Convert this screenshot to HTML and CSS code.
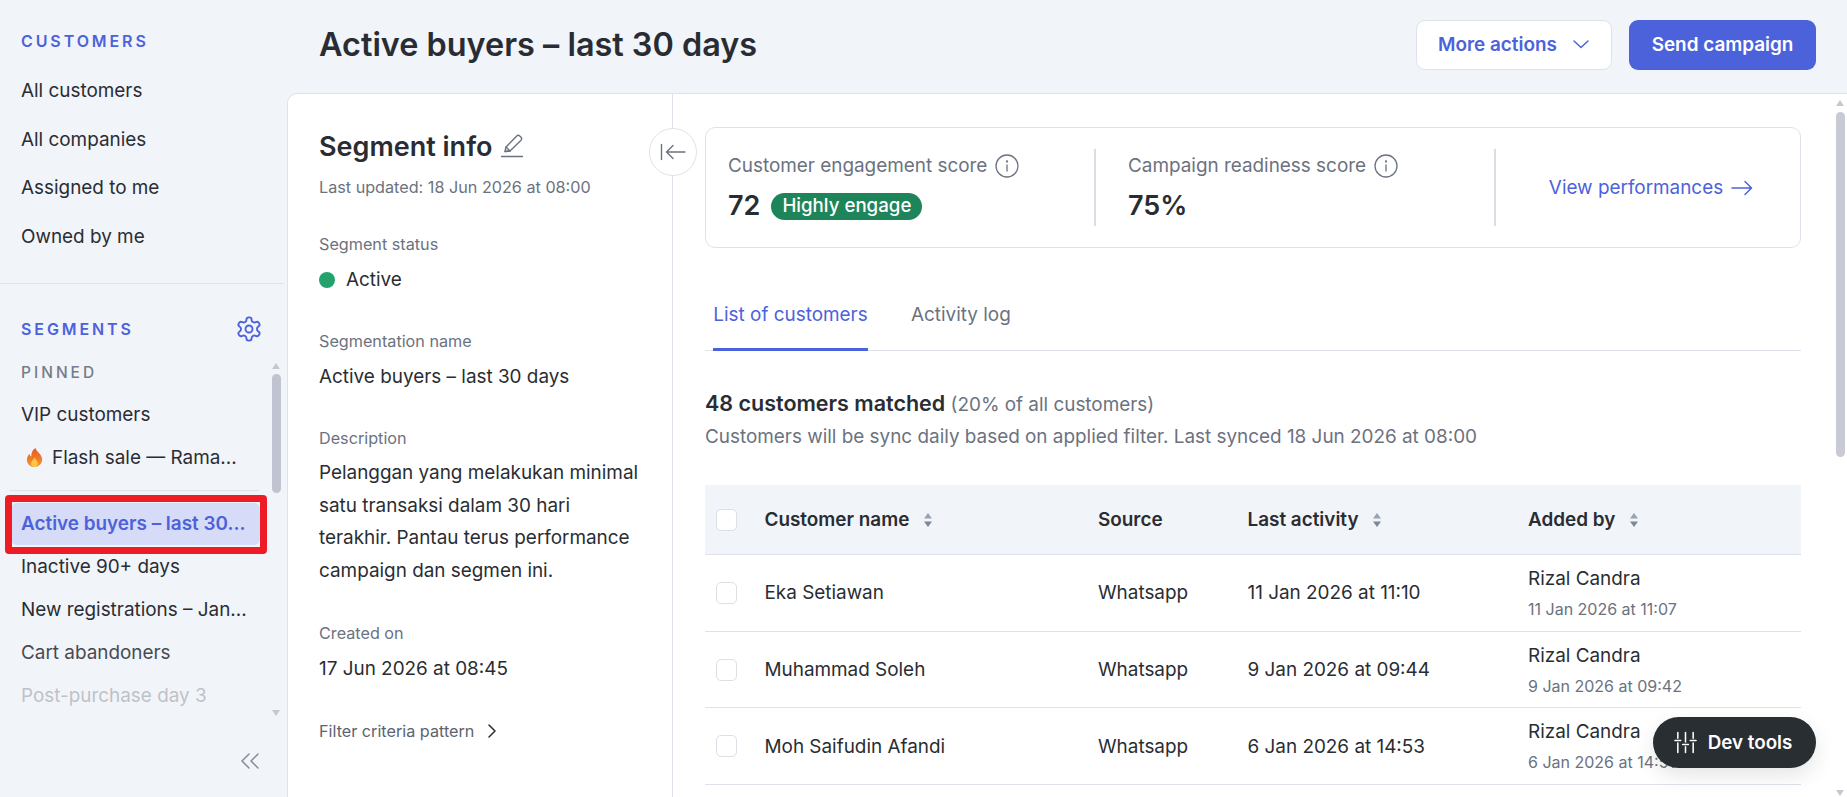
FILE: index.html
```html
<!DOCTYPE html>
<html lang="en">
<head>
  <meta charset="UTF-8">
  <title>Active buyers – last 30 days</title>
  <link rel="stylesheet" href="styles.css">
</head>
<body>

  <div class="app">
    <aside class="sidebar">
      <div class="side-top">
        <h3 class="side-title">CUSTOMERS</h3>
        <a class="side-link">All customers</a>
        <a class="side-link">All companies</a>
        <a class="side-link">Assigned to me</a>
        <a class="side-link">Owned by me</a>
      </div>

      <div class="side-segments">
        <div class="segments-head">
          <h3 class="side-title">SEGMENTS</h3>
          <svg class="gear" viewBox="0 0 24 24" fill="none" stroke="currentColor" stroke-width="1.6" stroke-linecap="round" stroke-linejoin="round">
            <path d="M12.22 2h-.44a2 2 0 0 0-2 2v.18a2 2 0 0 1-1 1.73l-.43.25a2 2 0 0 1-2 0l-.15-.08a2 2 0 0 0-2.73.73l-.22.38a2 2 0 0 0 .73 2.73l.15.1a2 2 0 0 1 1 1.72v.51a2 2 0 0 1-1 1.74l-.15.09a2 2 0 0 0-.73 2.73l.22.38a2 2 0 0 0 2.73.73l.15-.08a2 2 0 0 1 2 0l.43.25a2 2 0 0 1 1 1.73V20a2 2 0 0 0 2 2h.44a2 2 0 0 0 2-2v-.18a2 2 0 0 1 1-1.73l.43-.25a2 2 0 0 1 2 0l.15.08a2 2 0 0 0 2.73-.73l.22-.39a2 2 0 0 0-.73-2.73l-.15-.08a2 2 0 0 1-1-1.74v-.5a2 2 0 0 1 1-1.74l.15-.09a2 2 0 0 0 .73-2.73l-.22-.38a2 2 0 0 0-2.73-.73l-.15.08a2 2 0 0 1-2 0l-.43-.25a2 2 0 0 1-1-1.73V4a2 2 0 0 0-2-2z"/>
            <circle cx="12" cy="12" r="3"/>
          </svg>
        </div>

        <div class="segments-scroll">
          <div class="pinned-label">PINNED</div>
          <a class="seg-link">VIP customers</a>
          <a class="seg-link seg-flash">
            <svg class="flame" viewBox="0 0 18 22">
              <defs>
                <linearGradient id="flameFill" x1="0" y1="0" x2="0" y2="1">
                  <stop offset="0" stop-color="#e8552a"/>
                  <stop offset="1" stop-color="#f59a23"/>
                </linearGradient>
              </defs>
              <path d="M10 1c1 4 6 6 7 11 .7 5-3.300 9-8 9s-8.500-3.500-8-8.500c.3-2.500 1.600-4 2.700-5.500.3 1.500.8 2.500 1.800 3C5.500 6 7 3 10 1z" fill="url(#flameFill)"/>
              <path d="M9 11c.5 2 3.500 3.300 3.500 6 0 2.300-1.700 4-3.700 4s-3.500-1.700-3.500-3.700c0-2.300 2.700-3.600 3.700-6.300z" fill="#fbc64a"/>
            </svg>
            Flash sale — Rama...
          </a>
          <div class="seg-divider"></div>
          <a class="seg-link seg-active">Active buyers – last 30...</a>
          <a class="seg-link">Inactive 90+ days</a>
          <a class="seg-link">New registrations – Jan...</a>
          <a class="seg-link seg-fade1">Cart abandoners</a>
          <a class="seg-link seg-fade2">Post-purchase day 3</a>

          <div class="mini-scroll">
            <span class="arrow-up"></span>
            <span class="mini-thumb"></span>
            <span class="arrow-down"></span>
          </div>
        </div>

        <div class="side-collapse">
          <svg viewBox="0 0 20 18" fill="none" stroke="currentColor" stroke-width="1.5" stroke-linecap="round" stroke-linejoin="round">
            <path d="M9 2 2 9l7 7"/>
            <path d="M18 2l-7 7 7 7"/>
          </svg>
        </div>
      </div>

      <div class="highlight-box"></div>
    </aside>

    <div class="main">
      <header class="topbar">
        <h1>Active buyers – last 30 days</h1>
        <div class="top-actions">
          <button class="btn btn-outline">More actions
            <svg viewBox="0 0 18 10" fill="none" stroke="currentColor" stroke-width="1.5" stroke-linecap="round" stroke-linejoin="round"><path d="M2 2l7 6.500L16 2"/></svg>
          </button>
          <button class="btn btn-primary">Send campaign</button>
        </div>
      </header>

      <div class="card">
        <section class="info-panel">
          <div class="info-title">
            <h2>Segment info</h2>
            <svg viewBox="0 0 24 26" fill="none" stroke="currentColor" stroke-width="1.4" stroke-linecap="round" stroke-linejoin="round">
              <path d="M5 18.500l1-4.500L16.500 3.200a2.500 2.500 0 0 1 3.500 0l.8.8a2.500 2.500 0 0 1 0 3.500L10 18z"/>
              <path d="M5 18.500l5-.5M6 14l4 4"/>
              <path d="M1.500 23.500h21"/>
            </svg>
          </div>
          <p class="updated">Last updated: 18 Jun 2026 at 08:00</p>

          <div class="field field-status">
            <div class="field-label">Segment status</div>
            <div class="field-value status"><span class="dot"></span>Active</div>
          </div>
          <div class="field">
            <div class="field-label">Segmentation name</div>
            <div class="field-value">Active buyers – last 30 days</div>
          </div>
          <div class="field">
            <div class="field-label">Description</div>
            <div class="field-value desc">Pelanggan yang melakukan minimal satu transaksi dalam 30 hari terakhir. Pantau terus performance campaign dan segmen ini.</div>
          </div>
          <div class="field">
            <div class="field-label">Created on</div>
            <div class="field-value">17 Jun 2026 at 08:45</div>
          </div>
          <div class="filter-link">Filter criteria pattern
            <svg viewBox="0 0 10 16" fill="none" stroke="currentColor" stroke-width="1.5" stroke-linecap="round" stroke-linejoin="round"><path d="M2 2l6 6-6 6"/></svg>
          </div>

          <div class="collapse-btn">
            <svg viewBox="0 0 26 18" fill="none" stroke="currentColor" stroke-width="1.4" stroke-linecap="round" stroke-linejoin="round">
              <path d="M1.500 1.500v15"/>
              <path d="M25 9H7M13 2.500 6.500 9l6.500 6.500"/>
            </svg>
          </div>
        </section>

        <section class="content">
          <div class="scores">
            <div class="score">
              <div class="score-label">Customer engagement score
                <svg class="info" viewBox="0 0 24 24" fill="none" stroke="currentColor" stroke-width="1.3" stroke-linecap="round"><circle cx="12" cy="12" r="11"/><path d="M12 11v6"/><circle cx="12" cy="7.500" r=".5"/></svg>
              </div>
              <div class="score-value">72 <span class="badge">Highly engage</span></div>
            </div>
            <div class="score">
              <div class="score-label">Campaign readiness score
                <svg class="info" viewBox="0 0 24 24" fill="none" stroke="currentColor" stroke-width="1.3" stroke-linecap="round"><circle cx="12" cy="12" r="11"/><path d="M12 11v6"/><circle cx="12" cy="7.500" r=".5"/></svg>
              </div>
              <div class="score-value">75%</div>
            </div>
            <div class="score score-link">
              <a>View performances
                <svg viewBox="0 0 22 16" fill="none" stroke="currentColor" stroke-width="1.5" stroke-linecap="round" stroke-linejoin="round"><path d="M1 8h19M14 1.500 20.500 8 14 14.500"/></svg>
              </a>
            </div>
          </div>

          <nav class="tabs">
            <a class="tab tab-active">List of customers</a>
            <a class="tab">Activity log</a>
          </nav>

          <div class="matched">
            <div class="matched-count"><strong>48 customers matched</strong> <span>(20% of all customers)</span></div>
            <p>Customers will be sync daily based on applied filter. Last synced 18 Jun 2026 at 08:00</p>
          </div>

          <table class="customers">
            <colgroup>
              <col class="col-check">
              <col class="col-name">
              <col class="col-source">
              <col class="col-activity">
              <col>
            </colgroup>
            <thead>
              <tr>
                <th><span class="check"></span></th>
                <th>Customer name <svg class="sort" viewBox="0 0 10 16"><path d="M5 1 9 6.500H1z" fill="#9aa3b2"/><path d="M5 15 1 9.500h8z" fill="#7d8798"/></svg></th>
                <th>Source</th>
                <th>Last activity <svg class="sort" viewBox="0 0 10 16"><path d="M5 1 9 6.500H1z" fill="#9aa3b2"/><path d="M5 15 1 9.500h8z" fill="#7d8798"/></svg></th>
                <th>Added by <svg class="sort" viewBox="0 0 10 16"><path d="M5 1 9 6.500H1z" fill="#9aa3b2"/><path d="M5 15 1 9.500h8z" fill="#7d8798"/></svg></th>
              </tr>
            </thead>
            <tbody>
              <tr>
                <td><span class="check"></span></td>
                <td>Eka Setiawan</td>
                <td>Whatsapp</td>
                <td>11 Jan 2026 at 11:10</td>
                <td><div class="added">Rizal Candra</div><div class="added-date">11 Jan 2026 at 11:07</div></td>
              </tr>
              <tr>
                <td><span class="check"></span></td>
                <td>Muhammad Soleh</td>
                <td>Whatsapp</td>
                <td>9 Jan 2026 at 09:44</td>
                <td><div class="added">Rizal Candra</div><div class="added-date">9 Jan 2026 at 09:42</div></td>
              </tr>
              <tr>
                <td><span class="check"></span></td>
                <td>Moh Saifudin Afandi</td>
                <td>Whatsapp</td>
                <td>6 Jan 2026 at 14:53</td>
                <td><div class="added">Rizal Candra</div><div class="added-date">6 Jan 2026 at 14:51</div></td>
              </tr>
            </tbody>
          </table>
        </section>

        <div class="main-scroll">
          <span class="arrow-up"></span>
          <span class="main-thumb"></span>
          <span class="arrow-down"></span>
        </div>
      </div>
    </div>

    <button class="dev-tools">
      <svg viewBox="0 0 24 24" fill="none" stroke="currentColor" stroke-width="1.6" stroke-linecap="round">
        <path d="M4 1.500v6M4 12.500v10M12 1.500v10M12 16.500v6M20 1.500v6M20 12.500v10"/>
        <path d="M1 10h6M9 14h6M17 10h6"/>
      </svg>
      Dev tools
    </button>
  </div>

</body>
</html>
```
FILE: styles.css
```css
* {
  box-sizing: border-box;
}

html,
body {
  margin: 0;
  height: 100%;
  overflow: hidden;
}

body {
  font-family: Inter, "Liberation Sans", sans-serif;
  font-size: 18.900px;
  color: #292d33;
  background-color: #f1f4f9;
}

.app {
  display: flex;
  height: 797px;
  position: relative;
}

/* sidebar */
.sidebar {
  width: 287px;
  flex-shrink: 0;
  position: relative;
}

.side-top {
  height: 284px;
  padding: 31px 0 0 21px;
  border-bottom: 1px solid #dde1e9;
  margin-right: 3px;
}

.side-title {
  margin: 0;
  font-size: 16px;
  line-height: 20px;
  font-weight: 600;
  letter-spacing: 2.9px;
  color: #4c62db;
}

.side-top .side-title {
  margin-bottom: 16px;
}

.side-link {
  display: block;
  height: 48.500px;
  line-height: 48.500px;
}

.side-segments {
  padding-left: 21px;
  position: relative;
}

.segments-head {
  display: flex;
  align-items: center;
  justify-content: space-between;
  padding: 33px 24px 0 0;
  height: 57px;
}

.gear {
  width: 28px;
  height: 28px;
  color: #4c62db;
}

.segments-scroll {
  position: relative;
  height: 355px;
  margin-left: -21px;
  padding-left: 21px;
}

.pinned-label {
  margin-top: 22px;
  height: 20px;
  line-height: 20px;
  font-size: 15.500px;
  font-weight: 500;
  letter-spacing: 3px;
  color: #767c88;
}

.seg-link {
  display: block;
  height: 43px;
  line-height: 43px;
  white-space: nowrap;
}

.pinned-label + .seg-link {
  margin-top: 10px;
}

.seg-flash {
  display: flex;
  align-items: center;
  gap: 9px;
  padding-left: 5px;
}

.flame {
  width: 17px;
  height: 21px;
}

.seg-divider {
  height: 1px;
  width: 249px;
  margin: 11px 0 12px -11px;
  background-color: #dde1e9;
}

.seg-active {
  height: 42px;
  line-height: 42px;
  width: 249px;
  margin: 0 0 0 -10px;
  padding-left: 10px;
  font-weight: 600;
  color: #4c62db;
  background-color: #d6dbf7;
  border-radius: 6px;
}

.seg-fade1 {
  opacity: 0.85;
}

.seg-fade2 {
  opacity: 0.25;
}

.mini-scroll {
  position: absolute;
  top: 0;
  left: 272px;
  width: 9px;
  height: 353px;
}

.mini-thumb {
  position: absolute;
  top: 11px;
  left: 0;
  width: 9px;
  height: 119px;
  border-radius: 5px;
  background-color: #c0c4d0;
}

.arrow-up,
.arrow-down {
  position: absolute;
  left: 0;
  width: 0;
  height: 0;
  border-left: 4.500px solid transparent;
  border-right: 4.500px solid transparent;
}

.arrow-up {
  top: 0;
  border-bottom: 6px solid #c5c8d2;
}

.arrow-down {
  bottom: 0;
  border-top: 6px solid #c5c8d2;
}

.side-collapse {
  display: flex;
  justify-content: flex-end;
  padding: 34px 27px 0 0;
  color: #858b98;
}

.side-collapse svg {
  width: 20px;
  height: 18px;
}

.highlight-box {
  position: absolute;
  top: 495px;
  left: 5px;
  width: 262px;
  height: 59px;
  border: 7px solid #ee1c25;
  border-radius: 4px;
}

/* main */
.main {
  flex: 1;
  min-width: 0;
  display: flex;
  flex-direction: column;
}

.topbar {
  height: 93px;
  flex-shrink: 0;
  display: flex;
  align-items: flex-start;
  justify-content: space-between;
  padding: 20px 31px 0 32px;
}

.topbar h1 {
  margin: 1px 0 0;
  font-size: 32.400px;
  line-height: 48px;
  font-weight: 600;
}

.top-actions {
  display: flex;
  gap: 17px;
}

.btn {
  height: 50px;
  border-radius: 9px;
  font-family: inherit;
  font-size: 18.900px;
  font-weight: 600;
  padding: 0 0 2px;
}

.btn-outline {
  width: 196px;
  display: flex;
  align-items: center;
  justify-content: center;
  gap: 15px;
  color: #4c62db;
  background-color: #fff;
  border: 1px solid #dfe2ea;
}

.btn-outline svg {
  width: 18px;
  height: 10px;
}

.btn-primary {
  width: 187px;
  color: #fff;
  background-color: #4c62db;
  border: 0;
}

.card {
  flex: 1;
  min-height: 0;
  display: flex;
  position: relative;
  background-color: #fff;
  border-top: 1px solid #dfe2ea;
  border-left: 1px solid #dfe2ea;
  border-top-left-radius: 10px;
}

/* segment info */
.info-panel {
  width: 385px;
  flex-shrink: 0;
  padding: 33px 0 0 31px;
  border-right: 1px solid #dfe2ea;
  position: relative;
}

.info-title {
  display: flex;
  align-items: center;
  gap: 8px;
  height: 38px;
}

.info-title h2 {
  margin: 0;
  font-size: 27px;
  font-weight: 600;
}

.info-title svg {
  width: 24px;
  height: 26px;
  color: #6b7280;
}

.updated {
  margin: 12px 0 0;
  font-size: 16.200px;
  line-height: 20px;
  color: #6b7280;
}

.field {
  margin-top: 40px;
}

.field-status {
  margin-top: 37px;
}

.field-label {
  font-size: 16.200px;
  line-height: 20px;
  color: #6b7280;
}

.field-value {
  margin-top: 15px;
  line-height: 22px;
}

.status {
  display: flex;
  align-items: center;
  gap: 11px;
}

.dot {
  width: 16px;
  height: 16px;
  border-radius: 50%;
  background-color: #23a26d;
}

.desc {
  width: 322px;
  margin: 9px 0 -5px;
  line-height: 32.700px;
}

.filter-link {
  display: flex;
  align-items: center;
  gap: 13px;
  margin-top: 41px;
  font-size: 16.200px;
  line-height: 20px;
  color: #5c6370;
}

.filter-link svg {
  width: 10px;
  height: 16px;
  color: #292d33;
}

.collapse-btn {
  position: absolute;
  top: 34px;
  right: -25px;
  width: 48px;
  height: 48px;
  display: flex;
  align-items: center;
  justify-content: center;
  border: 1px solid #dfe2ea;
  border-radius: 50%;
  background-color: #fff;
  color: #6b7280;
}

.collapse-btn svg {
  width: 26px;
  height: 18px;
}

/* right content */
.content {
  flex: 1;
  min-width: 0;
  padding: 33px 46px 0 32px;
}

.scores {
  display: flex;
  height: 121px;
  padding: 21px 0;
  border: 1px solid #dfe2ea;
  border-radius: 10px;
}

.score {
  width: 390px;
  padding: 5px 0 0 22px;
  border-right: 2px solid #d9dde4;
}

.score + .score {
  width: 400px;
  padding-left: 32px;
}

.score-label {
  display: flex;
  align-items: center;
  gap: 8px;
  line-height: 24px;
  color: #6b7280;
}

.info {
  width: 24px;
  height: 24px;
}

.score-value {
  display: flex;
  align-items: center;
  gap: 11px;
  margin-top: 11px;
  font-size: 27px;
  line-height: 34px;
  font-weight: 600;
}

.badge {
  height: 27px;
  padding: 0 11px;
  border-radius: 14px;
  font-size: 18.700px;
  line-height: 26px;
  font-weight: 500;
  color: #fff;
  background-color: #1e8459;
}

.score.score-link {
  flex: 1;
  width: auto;
  padding: 0 0 0 6px;
  border-right: 0;
  display: flex;
  align-items: center;
  justify-content: center;
}

.score-link a {
  display: flex;
  align-items: center;
  gap: 8px;
  color: #4c62db;
}

.score-link svg {
  width: 22px;
  height: 16px;
}

.tabs {
  display: flex;
  gap: 43px;
  height: 103px;
  padding: 0 0 0 8px;
  align-items: flex-end;
  border-bottom: 1px solid #dfe2ea;
}

.tab {
  height: 49px;
  line-height: 26px;
  color: #6b7280;
  margin-bottom: -1px;
  white-space: nowrap;
}

.tab-active {
  width: 155px;
  text-align: center;
  color: #4c62db;
  border-bottom: 3px solid #4c62db;
}

.matched {
  padding-top: 40px;
}

.matched-count {
  line-height: 24px;
  color: #6b7280;
}

.matched-count strong {
  font-size: 21.500px;
  font-weight: 600;
  color: #292d33;
}

.matched p {
  margin: 8px 0 0;
  line-height: 24px;
  color: #6b7280;
}

.customers {
  width: 100%;
  margin-top: 36px;
  table-layout: fixed;
  border-collapse: collapse;
}

.col-check {
  width: 59.500px;
}

.col-name {
  width: 333.500px;
}

.col-source {
  width: 149.500px;
}

.col-activity {
  width: 280.500px;
}

.customers th {
  height: 69.500px;
  padding: 0;
  text-align: left;
  font-weight: 600;
  background-color: #f1f4f9;
  border-bottom: 1px solid #dfe2ea;
  white-space: nowrap;
}

.customers td {
  height: 76.700px;
  padding: 0;
  border-bottom: 1px solid #dfe2ea;
  white-space: nowrap;
}

.customers th:first-child,
.customers td:first-child {
  padding-left: 11px;
}

.check {
  display: block;
  width: 21px;
  height: 22px;
  border: 1px solid #dcdfe6;
  border-radius: 5px;
  background-color: #fff;
}

.sort {
  width: 10px;
  height: 16px;
  margin-left: 9px;
  vertical-align: -2px;
}

.added {
  line-height: 24px;
}

.added-date {
  margin-top: 8px;
  font-size: 16px;
  line-height: 20px;
  color: #6b7280;
}

.main-scroll {
  position: absolute;
  top: 6px;
  right: 2px;
  width: 9px;
  height: 696px;
}

.main-thumb {
  position: absolute;
  top: 12px;
  left: 0;
  width: 9px;
  height: 345px;
  border-radius: 5px;
  background-color: #c8cbd3;
}

.dev-tools {
  position: absolute;
  top: 717px;
  left: 1653px;
  width: 163px;
  height: 51px;
  display: flex;
  align-items: center;
  justify-content: center;
  gap: 11px;
  padding: 0 3px 0 0;
  border: 0;
  border-radius: 26px;
  font-family: inherit;
  font-size: 18.800px;
  font-weight: 600;
  color: #fff;
  background-color: #292e33;
  box-shadow: 0 8px 20px rgba(41, 46, 51, 0.12);
}

.dev-tools svg {
  width: 23px;
  height: 23px;
}
```
